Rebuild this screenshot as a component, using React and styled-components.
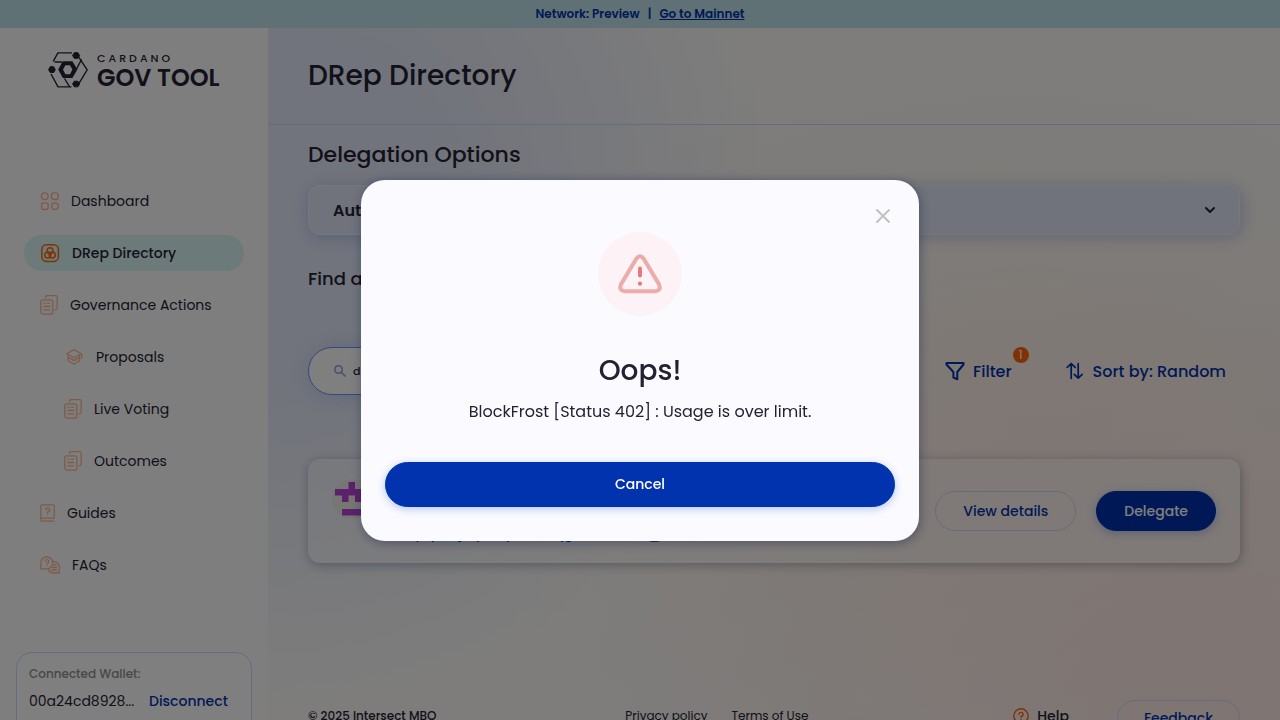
import React from "react";
import styled, { createGlobalStyle } from "styled-components";

const Global = createGlobalStyle`
  *, *::before, *::after { box-sizing: border-box; }
  html, body { margin: 0; }
  body {
    overflow: hidden;
    font-family: Poppins, Inter, "Noto Sans", sans-serif;
    font-size: 14px;
    color: #242232;
    background: #fbfbff;
  }
  h1, h2, h3, p, ul { margin: 0; padding: 0; }
  ul { list-style: none; }
  button, input { font: inherit; color: inherit; }
  button { cursor: pointer; }
  a { color: inherit; text-decoration: none; }
  svg { display: block; flex: none; }
`;

const Banner = styled.div`
  height: 28px;
  display: flex;
  align-items: center;
  justify-content: center;
  gap: 8px;
  background: #bee3eb;
  color: #0033ad;
  font-size: 12px;
  font-weight: 600;
  a { text-decoration: underline; }
`;

const Shell = styled.div`
  display: flex;
  min-height: 100vh;
`;

const Sidebar = styled.aside`
  width: 268px;
  flex: none;
  display: flex;
  flex-direction: column;
  background: #fcfcff;
`;

const Logo = styled.a`
  display: flex;
  align-items: center;
  gap: 9px;
  padding: 24px 0 0 48px;
  height: 60px;
`;

const LogoText = styled.span`
  display: flex;
  flex-direction: column;
  padding-top: 2px;
`;

const LogoTop = styled.span`
  font-size: 11px;
  line-height: 14px;
  font-weight: 500;
  letter-spacing: 3px;
`;

const LogoMain = styled.span`
  font-size: 24px;
  line-height: 26px;
  font-weight: 600;
  white-space: nowrap;
`;

const Nav = styled.ul`
  display: flex;
  flex-direction: column;
  gap: 16px;
  margin: 95px 24px 0;
`;

const NavLink = styled.a`
  display: flex;
  align-items: center;
  gap: 12px;
  height: 36px;
  padding-left: ${(p) => (p.$nested ? 40 : 16)}px;
  border-radius: 18px;
  background: ${(p) => (p.$active ? "#d9f4f3" : "transparent")};
  font-weight: ${(p) => (p.$active ? 500 : 400)};
  font-size: 14px;
  svg { opacity: ${(p) => (p.$active ? 1 : 0.45)}; color: #ff640a; }
`;

const Wallet = styled.section`
  margin: auto 16px 0;
  height: 96px;
  padding: 12px;
  border: 1px solid #ccd8ff;
  border-radius: 16px;
  background: rgba(255, 255, 255, 0.7);
`;

const WalletLabel = styled.p`
  color: #8e908e;
  font-size: 12px;
  line-height: 18px;
  font-weight: 500;
`;

const WalletRow = styled.div`
  display: flex;
  align-items: center;
  gap: 12px;
  margin-top: 8px;
`;

const Address = styled.span`
  width: 108px;
  overflow: hidden;
  white-space: nowrap;
  text-overflow: ellipsis;
`;

const TextButton = styled.button`
  display: flex;
  align-items: center;
  gap: 8px;
  padding: 0;
  border: 0;
  background: none;
  color: #0033ad;
  font-size: ${(p) => (p.$large ? 16 : 14)}px;
  font-weight: 500;
`;

const Main = styled.main`
  flex: 1;
  min-width: 0;
  display: flex;
  flex-direction: column;
  background:
    radial-gradient(ellipse 65% 65% at 95% 95%, rgba(255, 226, 220, 0.65), transparent),
    radial-gradient(ellipse 60% 55% at 75% 55%, rgba(255, 240, 229, 0.8), transparent),
    radial-gradient(ellipse 50% 70% at 0% 25%, rgba(226, 231, 248, 0.95) 35%, transparent),
    #fcfbf9;
`;

const Header = styled.header`
  height: 97px;
  display: flex;
  align-items: center;
  padding: 0 40px;
  border-bottom: 1px solid #ccd8ff;
`;

const Title = styled.h1`
  font-size: 28px;
  line-height: 36px;
  font-weight: 500;
`;

const Content = styled.div`
  flex: 1;
  padding: 12px 40px 0;
`;

const Heading = styled.h2`
  font-size: ${(p) => (p.$small ? 18 : 22)}px;
  line-height: 36px;
  font-weight: 500;
`;

const Options = styled.button`
  display: flex;
  align-items: center;
  justify-content: space-between;
  width: 100%;
  height: 50px;
  margin: 12px 0 26px;
  padding: 0 24px;
  border: 1px solid #f5efee;
  border-radius: 12px;
  background: #e1e7f7;
  box-shadow: 2px 2px 15px rgba(47, 98, 220, 0.3);
  font-size: 16px;
  font-weight: 600;
`;

const Toolbar = styled.div`
  display: flex;
  align-items: center;
  justify-content: space-between;
  height: 48px;
  margin-top: 50px;
  padding-right: 14px;
`;

const Search = styled.label`
  display: flex;
  align-items: center;
  gap: 6px;
  width: 500px;
  height: 48px;
  padding: 0 24px;
  border: 1px solid #6b93ff;
  border-radius: 24px;
  background: #fff;
  box-shadow: 2px 2px 20px rgba(47, 98, 220, 0.2);
  input {
    flex: 1;
    min-width: 0;
    padding: 0;
    border: 0;
    outline: 0;
    background: none;
    font-size: 11px;
    font-weight: 500;
  }
`;

const Actions = styled.div`
  display: flex;
  gap: 53px;
`;

const FilterWrap = styled.div`
  position: relative;
`;

const Badge = styled.span`
  position: absolute;
  top: -12px;
  right: -17px;
  width: 16px;
  height: 16px;
  border-radius: 50%;
  background: #ff640a;
  color: #fff;
  font-size: 12px;
  line-height: 16px;
  text-align: center;
`;

const Card = styled.article`
  display: flex;
  align-items: center;
  justify-content: space-between;
  height: 104px;
  margin-top: 64px;
  padding: 0 24px;
  border-radius: 12px;
  background: rgba(255, 255, 255, 0.3);
  box-shadow: 1px 2px 11px rgba(0, 18, 61, 0.3);
`;

const Profile = styled.div`
  display: flex;
  gap: 20px;
`;

const Avatar = styled.span`
  width: 40px;
  height: 40px;
  border-radius: 50%;
  overflow: hidden;
  background: #ecece7;
`;

const Details = styled.div`
  display: flex;
  flex-direction: column;
  line-height: 20px;
`;

const DRepName = styled.h3`
  font-size: 16px;
  font-weight: 600;
`;

const CopyButton = styled(TextButton)`
  margin-top: 24px;
`;

const ButtonRow = styled.div`
  display: flex;
  gap: 20px;
`;

const Pill = styled.button`
  height: ${(p) => (p.$tall ? 45 : 40)}px;
  padding: 0 27px;
  border: 1px solid ${(p) => (p.$filled ? "#0033ad" : "#ccd8ff")};
  border-radius: 24px;
  background: ${(p) => (p.$filled ? "#0033ad" : "transparent")};
  color: ${(p) => (p.$filled ? "#fff" : "#0033ad")};
  box-shadow: ${(p) => (p.$filled ? "0 2px 8px rgba(47, 98, 220, 0.35)" : "none")};
  font-size: 14px;
  font-weight: 500;
  white-space: nowrap;
`;

const Footer = styled.footer`
  display: flex;
  align-items: flex-start;
  justify-content: space-between;
  height: 48px;
  padding: 0 40px;
  font-size: 12px;
  line-height: 32px;
`;

const Copyright = styled.span`
  font-weight: 500;
`;

const Links = styled.nav`
  display: flex;
  gap: 24px;
`;

const Support = styled.div`
  display: flex;
  align-items: flex-start;
  gap: 48px;
  padding-left: 16px;
`;

const Help = styled.a`
  display: flex;
  align-items: center;
  gap: 8px;
  font-size: 14px;
  font-weight: 500;
`;

const SmallPill = styled(Pill)`
  height: 36px;
  padding: 0 26px;
`;

const Backdrop = styled.div`
  position: fixed;
  inset: 0;
  display: grid;
  place-items: center;
  background: rgba(0, 0, 0, 0.5);
`;

const Dialog = styled.section`
  position: relative;
  width: 558px;
  max-width: calc(100vw - 32px);
  padding: 52px 24px 34px;
  display: flex;
  flex-direction: column;
  align-items: center;
  border-radius: 24px;
  background: #fbfbff;
  box-shadow: 1px 2px 11px rgba(0, 18, 61, 0.37);
`;

const Close = styled.button`
  position: absolute;
  top: 24px;
  right: 24px;
  padding: 0;
  border: 0;
  background: none;
  color: #c1c1c1;
`;

const DialogTitle = styled.h2`
  margin-top: 32px;
  font-size: 28px;
  line-height: 46px;
  font-weight: 500;
`;

const Message = styled.p`
  margin: 6px 0 38px;
  font-size: 16px;
  line-height: 24px;
  text-align: center;
`;

const DialogButton = styled(Pill)`
  width: 100%;
`;

const stroke = { fill: "none", stroke: "currentColor", strokeLinecap: "round", strokeLinejoin: "round" };

const DashboardIcon = () => (
  <svg width="19" height="20" viewBox="0 0 19 20" {...stroke} strokeWidth="1.4">
    <circle cx="4.8" cy="5.2" r="3.3" />
    <rect x="11.6" y="1.9" width="6.6" height="6.6" rx="2.2" />
    <rect x="1.5" y="11.9" width="6.6" height="6.6" rx="2.2" />
    <circle cx="14.9" cy="15.2" r="3.3" />
  </svg>
);

const DRepIcon = () => (
  <svg width="20" height="20" viewBox="0 0 20 20" {...stroke} strokeWidth="1.5">
    <rect x="1.8" y="1.8" width="16.6" height="16.6" rx="4.6" />
    <circle cx="10" cy="7.7" r="3" />
    <circle cx="7.8" cy="11.9" r="3" />
    <circle cx="12.3" cy="11.9" r="3" />
  </svg>
);

const DocsIcon = () => (
  <svg width="18" height="20" viewBox="0 0 18 20" {...stroke} strokeWidth="1.3">
    <path d="M5.5 2.4V2Q5.5.7 6.8.7H15.6Q17.2.7 17.2 2.3V13Q17.2 14.4 15.8 14.6H15" />
    <rect x=".8" y="4.8" width="12" height="14.4" rx="2" />
    <path d="M4 8.3h1M7.3 8.3h2M4 11.5h5.6M4 14.8h5.6" />
  </svg>
);

const ProposalsIcon = () => (
  <svg width="20" height="18" viewBox="0 0 20 18" {...stroke} strokeWidth="1.3">
    <path d="M2.7 5.8 10 1.6 17.3 5.8 10 9.8ZM17.7 6.2V10.3M4.2 7.8V9.2L10 12.6 15.6 9.2V7.8M4.2 9.8V12.7L10 16.2 15.6 12.7V9.8" />
  </svg>
);

const GuidesIcon = () => (
  <svg width="15" height="18" viewBox="0 0 15 18" {...stroke} strokeWidth="1.3">
    <path d="M14.3 14.2V2Q14.3.8 13 .8H2.2Q.8.8.8 2.2V15.3Q.8 17.2 2.7 17.2H14M.8 15Q1 14.2 2.4 14.2H14.3" />
    <path d="M5.6 5.7A2 2 0 1 1 7.6 7.8V9M7.6 11.2v.1" />
  </svg>
);

const FaqIcon = () => (
  <svg width="20" height="18" viewBox="0 0 20 18" {...stroke} strokeWidth="1.3">
    <path d="M.8 12.8V6.7A6 6 0 1 1 7 12.8Z" />
    <path d="M13.5 5.3A5.8 5.8 0 0 1 19.2 11V17H13.2A5.5 5.5 0 0 1 8 13M14 9h2M13 11.5h3.5M11.5 14H16.5" />
    <path d="M5.2 5.3A1.8 1.8 0 1 1 7 7.2V8.1M7 10v.1" />
  </svg>
);

const LogoMark = () => (
  <svg width="40" height="36" viewBox="0 0 40 36" fill="none" stroke="#242232" strokeWidth="1.4">
    <path d="M5.2 9.4 9.9.9H24M30.2 4.3 39.2 17.8 30.5 32.2M23.4 34.9H10L3 22M6.5 10H14M33.6 7.4 28.5 17M16.5 26.5 21.7 35" />
    <path d="M14.8 9.2H24.4L29.4 17.6 24.4 26H14.8L10.2 17.6ZM17.4 13.2 15 17.6 17.4 22.2H22L24.4 17.6 22 13.2Z" fill="#242232" fillRule="evenodd" stroke="none" />
    <g fill="#242232" strokeWidth="1" strokeLinejoin="round">
      <path d="M26.3.7H29.9L31.6 3.5 29.9 6.3H26.3L24.6 3.5ZM26.3 29.2H29.9L31.6 32 29.9 34.8H26.3L24.6 32ZM2.2 14.7H5.6L7.3 17.7 5.6 20.5H2.2L.6 17.7Z" />
    </g>
  </svg>
);

const nav = [
  { label: "Dashboard", Icon: DashboardIcon },
  { label: "DRep Directory", Icon: DRepIcon, active: true },
  { label: "Governance Actions", Icon: DocsIcon },
  { label: "Proposals", Icon: ProposalsIcon, nested: true },
  { label: "Live Voting", Icon: DocsIcon, nested: true },
  { label: "Outcomes", Icon: DocsIcon, nested: true },
  { label: "Guides", Icon: GuidesIcon },
  { label: "FAQs", Icon: FaqIcon },
];

export default function App() {
  return (
    <>
      <Global />
      <Banner>
        <span>Network: Preview</span>
        <span>|</span>
        <a href="#mainnet">Go to Mainnet</a>
      </Banner>
      <Shell>
        <Sidebar>
          <Logo href="#home">
            <LogoMark />
            <LogoText>
              <LogoTop>CARDANO</LogoTop>
              <LogoMain>GOV TOOL</LogoMain>
            </LogoText>
          </Logo>
          <Nav>
            {nav.map(({ label, Icon, active, nested }) => (
              <li key={label}>
                <NavLink href="#nav" $active={active} $nested={nested}>
                  <Icon />
                  {label}
                </NavLink>
              </li>
            ))}
          </Nav>
          <Wallet>
            <WalletLabel>Connected Wallet:</WalletLabel>
            <WalletRow>
              <Address>00a24cd8928...</Address>
              <TextButton>Disconnect</TextButton>
            </WalletRow>
          </Wallet>
        </Sidebar>
        <Main>
          <Header>
            <Title>DRep Directory</Title>
          </Header>
          <Content>
            <Heading>Delegation Options</Heading>
            <Options>
              Automated Voting Options
              <svg width="12" height="12" viewBox="0 0 12 12" {...stroke} strokeWidth="2">
                <path d="m3 4 4 4 4-4" />
              </svg>
            </Options>
            <Heading $small>Find a DRep</Heading>
            <Toolbar>
              <Search>
                <svg width="14" height="14" viewBox="0 0 14 14" fill="none" stroke="#8ea3d8" strokeWidth="1.6">
                  <circle cx="5.5" cy="5.5" r="3.7" />
                  <path d="m8.3 8.3 4.2 4.2" />
                </svg>
                <input aria-label="Search DReps" defaultValue="drep" />
              </Search>
              <Actions>
                <FilterWrap>
                  <TextButton $large>
                    <svg width="20" height="20" viewBox="0 0 20 20" {...stroke} strokeWidth="2">
                      <path d="M1.5 2H18.5V3.5L12.3 11V18.3L8.4 16.5V11L1.5 3.5Z" />
                    </svg>
                    Filter
                  </TextButton>
                  <Badge>1</Badge>
                </FilterWrap>
                <TextButton $large>
                  <svg width="20" height="20" viewBox="0 0 20 20" {...stroke} strokeWidth="1.7">
                    <path d="M6.2 17.3V2.5M2.2 6.3l4-3.8 4 3.8M13.2 2.5v14.6M9.3 13.3l3.9 3.8 4-3.8" />
                  </svg>
                  Sort by: Random
                </TextButton>
              </Actions>
            </Toolbar>
            <Card>
              <Profile>
                <Avatar>
                  <svg width="40" height="40" viewBox="0 0 40 40" fill="#b642d5">
                    <path d="M16.5 3H23V10H36.5V16.5H30V23H23V16.5H16.5V23H10V16.5H3V10H16.5ZM10 30H30V36.5H10Z" />
                  </svg>
                </Avatar>
                <Details>
                  <DRepName>DRep</DRepName>
                  <CopyButton aria-label="Copy DRep ID">
                    drep1ytz6jkqan7pn4w9qg8d0u3x...
                    <svg width="18" height="18" viewBox="0 0 18 18" {...stroke} strokeWidth="1.5">
                      <rect x="6" y="6" width="11" height="11" rx="3" />
                      <path d="M3 12V4Q3 2 5 2H12" />
                    </svg>
                  </CopyButton>
                </Details>
              </Profile>
              <ButtonRow>
                <Pill>View details</Pill>
                <Pill $filled>Delegate</Pill>
              </ButtonRow>
            </Card>
          </Content>
          <Footer>
            <Copyright>© 2025 Intersect MBO</Copyright>
            <Links>
              <a href="#privacy">Privacy policy</a>
              <a href="#terms">Terms of Use</a>
            </Links>
            <Support>
              <Help href="#help">
                <svg width="16" height="16" viewBox="0 0 16 16" {...stroke} stroke="#ff640a" strokeWidth="1.4">
                  <circle cx="8" cy="8" r="7.2" />
                  <path d="M6 6.3A2 2 0 1 1 8 8.4V9.3M8 11.5v.1" />
                </svg>
                Help
              </Help>
              <SmallPill>Feedback</SmallPill>
            </Support>
          </Footer>
        </Main>
      </Shell>
      <Backdrop>
        <Dialog role="dialog" aria-modal="true" aria-labelledby="dialog-title">
          <Close aria-label="Close">
            <svg width="24" height="24" viewBox="0 0 24 24" {...stroke} strokeWidth="2">
              <path d="m6 6 12 12M18 6 6 18" />
            </svg>
          </Close>
          <svg width="84" height="84" viewBox="0 0 84 84" fill="none">
            <circle cx="42" cy="42" r="42" fill="#fdf2f5" />
            <path d="M38.3 26.8Q42 21.8 45.7 26.8L61.2 52.6Q63.3 58.8 57.5 59.2H26.5Q20.7 58.8 22.8 52.6Z" stroke="#edacac" strokeWidth="4" strokeLinejoin="round" />
            <path d="M42 36.5v7" stroke="#e27b7b" strokeWidth="4" strokeLinecap="round" />
            <circle cx="42" cy="51.7" r="2.1" fill="#e27b7b" />
          </svg>
          <DialogTitle id="dialog-title">Oops!</DialogTitle>
          <Message>BlockFrost [Status 402] : Usage is over limit.</Message>
          <DialogButton $filled $tall>Cancel</DialogButton>
        </Dialog>
      </Backdrop>
    </>
  );
}
